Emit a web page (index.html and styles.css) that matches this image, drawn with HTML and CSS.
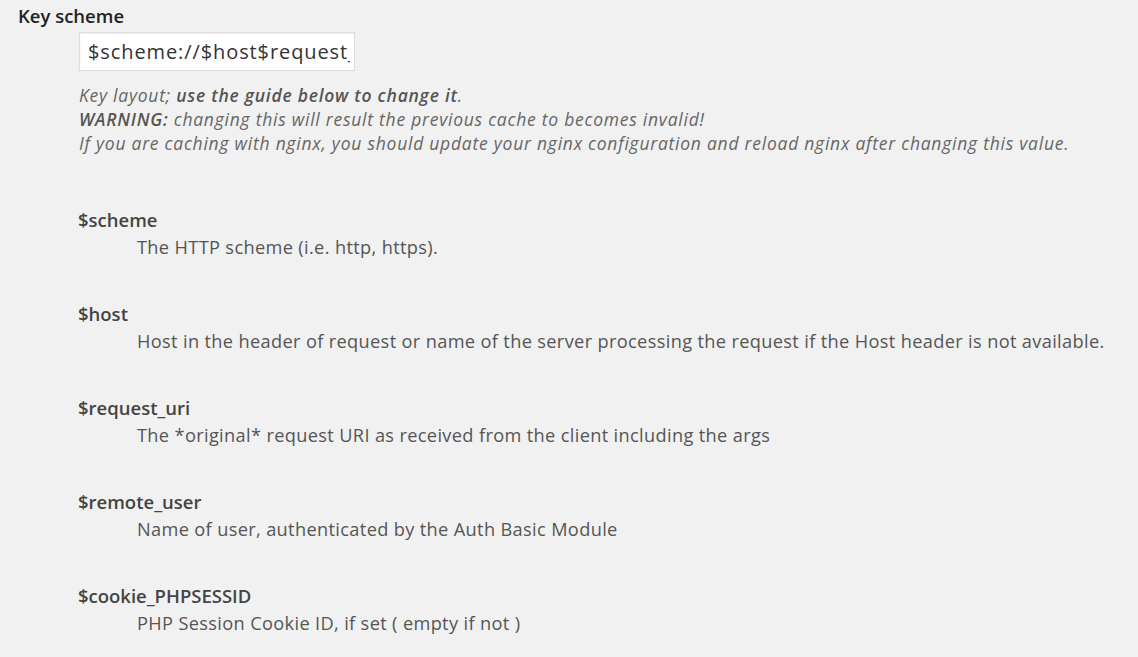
FILE: index.html
```html
<!DOCTYPE html>
<html lang="en">
<head>
    <meta charset="UTF-8">
    <meta name="viewport" content="width=device-width, initial-scale=1.0">
    <title>Key scheme</title>
    <link rel="stylesheet" href="styles.css">
</head>
<body>
    <div class="setting">
        <label class="setting-label" for="keyScheme">Key scheme</label>
        <div class="setting-body">
            <input type="text" id="keyScheme" class="key-input" value="$scheme://$host$request_uri">
            <p class="description">
                Key layout; <strong>use the guide below to change it</strong>.<br>
                <strong>WARNING:</strong> changing this will result the previous cache to becomes invalid!<br>
                If you are caching with nginx, you should update your nginx configuration and reload nginx after changing this value.
            </p>
            <dl class="key-guide">
                <dt>$scheme</dt>
                <dd>The HTTP scheme (i.e. http, https).</dd>
                <dt>$host</dt>
                <dd>Host in the header of request or name of the server processing the request if the Host header is not available.</dd>
                <dt>$request_uri</dt>
                <dd>The *original* request URI as received from the client including the args</dd>
                <dt>$remote_user</dt>
                <dd>Name of user, authenticated by the Auth Basic Module</dd>
                <dt>$cookie_PHPSESSID</dt>
                <dd>PHP Session Cookie ID, if set ( empty if not )</dd>
            </dl>
        </div>
    </div>
</body>
</html>
```

FILE: styles.css
```css
body {
    font-family: 'Open Sans', sans-serif;
    background: #f1f1f1;
    color: #444;
    margin: 0;
    padding: 4px 18px;
}

.setting-label {
    display: block;
    font-size: 18.5px;
    font-weight: 600;
    color: #222;
    line-height: 24px;
}

.setting-body {
    padding-left: 61px;
}

.key-input {
    display: block;
    margin-top: 4px;
    width: 276px;
    height: 39px;
    box-sizing: border-box;
    padding: 0 4px 0 8px;
    border: 1px solid #ddd;
    box-shadow: inset 0 1px 2px rgba(0, 0, 0, 0.07);
    background: #fff;
    color: #333;
    font-family: 'Open Sans', sans-serif;
    font-size: 20px;
    letter-spacing: 0.9px;
}

.description {
    margin: 13px 0 0;
    font-size: 17.5px;
    letter-spacing: 0.75px;
    font-style: italic;
    line-height: 23.8px;
    color: #666;
}

.description strong {
    font-weight: 600;
    color: #555;
}

.key-guide {
    margin: 51px 0 0 -1px;
}

.key-guide dt {
    font-size: 18.5px;
    font-weight: 600;
    color: #444;
    line-height: 27px;
}

.key-guide dd {
    margin: 0 0 39px 59px;
    padding-top: 1px;
    font-size: 18.2px;
    letter-spacing: 0.35px;
    line-height: 27px;
    color: #555;
}
```
